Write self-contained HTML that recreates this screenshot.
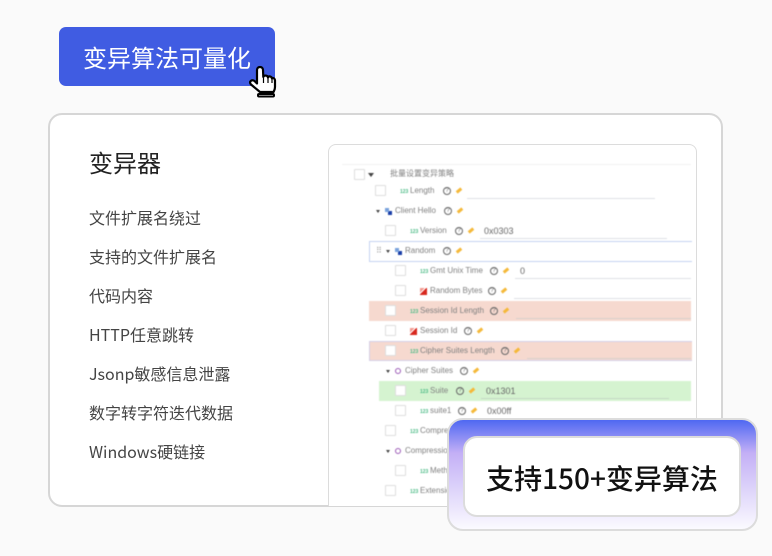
<!DOCTYPE html>
<html lang="zh"><head><meta charset="utf-8">
<style>
html,body{margin:0;padding:0;width:772px;height:556px;overflow:hidden;background:#fafafa;font-family:"Noto Sans CJK SC","Liberation Sans",sans-serif;}
.a{position:absolute;white-space:nowrap}
#btn{left:59px;top:27px;width:216px;height:59px;background:#405ce2;border-radius:7px;color:#fff;font-size:24px;line-height:60px;text-align:center;font-weight:400}
#card{left:48px;top:113px;width:671px;height:390px;background:#fff;border:2px solid #d6d6d6;border-radius:14px}
.t{left:89px;font-size:16px;line-height:24px;color:#444;font-weight:400;margin-top:-1px}
#shot{left:328px;top:144px;width:367px;height:361px;background:#fff;border:1px solid #dcdcdc;border-bottom:0;border-radius:8px 8px 0 0;overflow:hidden}
#tree{left:0;top:0;width:772px;height:556px;filter:blur(.5px);font-family:"Liberation Sans","Noto Sans CJK SC",sans-serif}
.cb{position:absolute;width:9px;height:9px;border:1px solid #dedede;background:#fff;border-radius:1px}
.l{position:absolute;font-size:8px;line-height:12px;color:#808080;white-space:nowrap}
.n{position:absolute;font-size:5px;line-height:12px;margin-top:1px;color:#4cbb86;font-weight:700;white-space:nowrap}
.q{position:absolute;width:6px;height:6px;border:1px solid #666;border-radius:50%;font-size:6px;line-height:6px;text-align:center;color:#666}
.p{position:absolute;width:6px;height:3px;background:#f5b93a;transform:rotate(-40deg)}
.v{position:absolute;font-size:9px;line-height:12px;color:#666;white-space:nowrap}
.u{position:absolute;height:1px;background:#dfe1e6}
.tri{position:absolute;width:0;height:0;border-left:2.5px solid transparent;border-right:2.5px solid transparent;border-top:3px solid #444}
.bg{position:absolute}
.dot{position:absolute;width:7px;height:7px}
.b{background:linear-gradient(#7aa3dc,#7aa3dc) 0 0/4px 4px no-repeat,linear-gradient(#1a3fa8,#1a3fa8) 100% 100%/4px 4px no-repeat}
.h{width:4px;height:4px;border:1.5px solid #9b59b6;border-radius:50%}
.x{width:7px;height:7px;background:linear-gradient(135deg,#f39a90 0 35%,#fff 35% 45%,#d8281e 45%)}
#pop{left:447px;top:418px;width:307px;height:109px;border:2px solid #dcdcdc;border-radius:16px;background:linear-gradient(180deg,#4f68f2 0%,#c3aff6 30%,#dcd2fa 62%,#fbfaff 100%)}
#inner{left:463px;top:436px;width:274px;height:77px;border:2px solid #dcdcdc;border-radius:14px;background:#fff;color:#111;font-size:28px;line-height:80px;text-align:center;font-weight:500}
</style></head><body>
<div class="a" id="btn">变异算法可量化</div>
<svg class="a" style="left:247px;top:65px" width="30" height="34" viewBox="0 0 30 34">
<path d="M13 27 L4 19.5 C1.5 17 4.5 14 7.5 16 L10 18.5 L10 5 C10 1 16 1 16 5 L16.3 12 C17 10 20.5 10 21 12.5 C21.5 10.8 24.5 11 25 13.5 C25.5 12.5 27.8 13 28 15.5 L28 22 C28 24.5 27 26 26.5 27 Z" fill="#fff" stroke="#000" stroke-width="2.2" stroke-linejoin="round"/>
<path d="M16.5 13 V18 M21 13 V18 M25 14 V18" stroke="#000" stroke-width="1.2" fill="none"/>
<rect x="11" y="29" width="16" height="2.5" rx="1" fill="#fff" stroke="#000" stroke-width="2"/>
</svg>
<div class="a" id="card"></div>
<div class="a" style="left:89px;top:145px;font-size:24px;line-height:34px;color:#222;font-weight:400">变异器</div>
<div class="a t" style="top:206px">文件扩展名绕过</div>
<div class="a t" style="top:245px">支持的文件扩展名</div>
<div class="a t" style="top:284px">代码内容</div>
<div class="a t" style="top:323px">HTTP任意跳转</div>
<div class="a t" style="top:362px">Jsonp敏感信息泄露</div>
<div class="a t" style="top:401px">数字转字符迭代数据</div>
<div class="a t" style="top:440px">Windows硬链接</div>
<div class="a" id="shot"></div>
<div class="a" id="tree">
<div class="u" style="left:342px;top:164px;width:349px;background:#f2f2f2"></div>
<div class="bg" style="left:369px;top:241px;width:322px;height:19px;border:1px solid #c5d3f2;border-right:0"></div>
<div class="bg" style="left:369px;top:301px;width:322px;height:20px;background:#f6d9cf"></div>
<div class="bg" style="left:369px;top:341px;width:322px;height:18px;background:#f6d9cf;border:1px solid #d5d0e8;border-right:0"></div>
<div class="bg" style="left:379px;top:381px;width:312px;height:20px;background:#d5f3d0"></div>

<div class="cb" style="left:354px;top:169px"></div><div class="tri" style="left:368px;top:173px;border-left-width:3.5px;border-right-width:3.5px;border-top-width:4px"></div>
<div class="l" style="left:390px;top:168px">批量设置变异策略</div>

<div class="cb" style="left:375px;top:185px"></div><div class="n" style="left:400px;top:185px">123</div><div class="l" style="left:410px;top:185px">Length</div><div class="q" style="left:443px;top:187px">?</div><div class="p" style="left:456px;top:189px"></div><div class="u" style="left:467px;top:198px;width:188px"></div>

<div class="tri" style="left:376px;top:210px"></div><div class="dot b" style="left:385px;top:208px"></div><div class="l" style="left:395px;top:205px">Client Hello</div><div class="q" style="left:444px;top:207px">?</div><div class="p" style="left:457px;top:209px"></div>

<div class="cb" style="left:385px;top:225px"></div><div class="n" style="left:410px;top:225px">123</div><div class="l" style="left:420px;top:225px">Version</div><div class="q" style="left:455px;top:227px">?</div><div class="p" style="left:468px;top:229px"></div><div class="v" style="left:484px;top:225px">0x0303</div><div class="u" style="left:480px;top:238px;width:187px"></div>

<div class="l" style="left:376px;top:245px;color:#999">⠿</div><div class="tri" style="left:386px;top:250px"></div><div class="dot b" style="left:395px;top:248px"></div><div class="l" style="left:405px;top:245px">Random</div><div class="q" style="left:443px;top:247px">?</div><div class="p" style="left:456px;top:249px"></div>

<div class="cb" style="left:395px;top:265px"></div><div class="n" style="left:420px;top:265px">123</div><div class="l" style="left:430px;top:265px">Gmt Unix Time</div><div class="q" style="left:490px;top:267px">?</div><div class="p" style="left:503px;top:269px"></div><div class="v" style="left:520px;top:265px">0</div><div class="u" style="left:515px;top:278px;width:176px"></div>

<div class="cb" style="left:395px;top:285px"></div><div class="dot x" style="left:420px;top:288px"></div><div class="l" style="left:430px;top:285px">Random Bytes</div><div class="q" style="left:488px;top:287px">?</div><div class="p" style="left:501px;top:289px"></div><div class="u" style="left:514px;top:298px;width:177px"></div>

<div class="cb" style="left:385px;top:305px"></div><div class="n" style="left:410px;top:305px">123</div><div class="l" style="left:420px;top:305px">Session Id Length</div><div class="q" style="left:490px;top:307px">?</div><div class="p" style="left:503px;top:309px"></div><div class="u" style="left:516px;top:318px;width:175px;background:#d8d0cc"></div>

<div class="cb" style="left:385px;top:325px"></div><div class="dot x" style="left:410px;top:328px"></div><div class="l" style="left:420px;top:325px">Session Id</div><div class="q" style="left:464px;top:327px">?</div><div class="p" style="left:477px;top:329px"></div>

<div class="cb" style="left:385px;top:345px"></div><div class="n" style="left:410px;top:345px">123</div><div class="l" style="left:420px;top:345px">Cipher Suites Length</div><div class="q" style="left:501px;top:347px">?</div><div class="p" style="left:514px;top:349px"></div><div class="u" style="left:527px;top:358px;width:164px;background:#d8d0cc"></div>

<div class="tri" style="left:386px;top:370px"></div><div class="dot h" style="left:395px;top:368px"></div><div class="l" style="left:405px;top:365px">Cipher Suites</div><div class="q" style="left:460px;top:367px">?</div><div class="p" style="left:473px;top:369px"></div>

<div class="cb" style="left:395px;top:385px"></div><div class="n" style="left:420px;top:385px">123</div><div class="l" style="left:430px;top:385px">Suite</div><div class="q" style="left:456px;top:387px">?</div><div class="p" style="left:469px;top:389px"></div><div class="v" style="left:486px;top:385px">0x1301</div><div class="u" style="left:481px;top:398px;width:188px;background:#c4d8c4"></div>

<div class="cb" style="left:395px;top:405px"></div><div class="n" style="left:420px;top:405px">123</div><div class="l" style="left:430px;top:405px">suite1</div><div class="q" style="left:458px;top:407px">?</div><div class="p" style="left:471px;top:409px"></div><div class="v" style="left:487px;top:405px">0x00ff</div>

<div class="cb" style="left:385px;top:425px"></div><div class="n" style="left:410px;top:425px">123</div><div class="l" style="left:420px;top:425px">Compression Length</div>
<div class="tri" style="left:386px;top:450px"></div><div class="dot h" style="left:395px;top:448px"></div><div class="l" style="left:405px;top:445px">Compression Methods</div>
<div class="cb" style="left:395px;top:465px"></div><div class="n" style="left:420px;top:465px">123</div><div class="l" style="left:430px;top:465px">Method</div>
<div class="cb" style="left:385px;top:485px"></div><div class="n" style="left:410px;top:485px">123</div><div class="l" style="left:420px;top:485px">Extensions Length</div>
</div>
<div class="a" id="pop"></div>
<div class="a" id="inner">支持150+变异算法</div>
</body></html>
